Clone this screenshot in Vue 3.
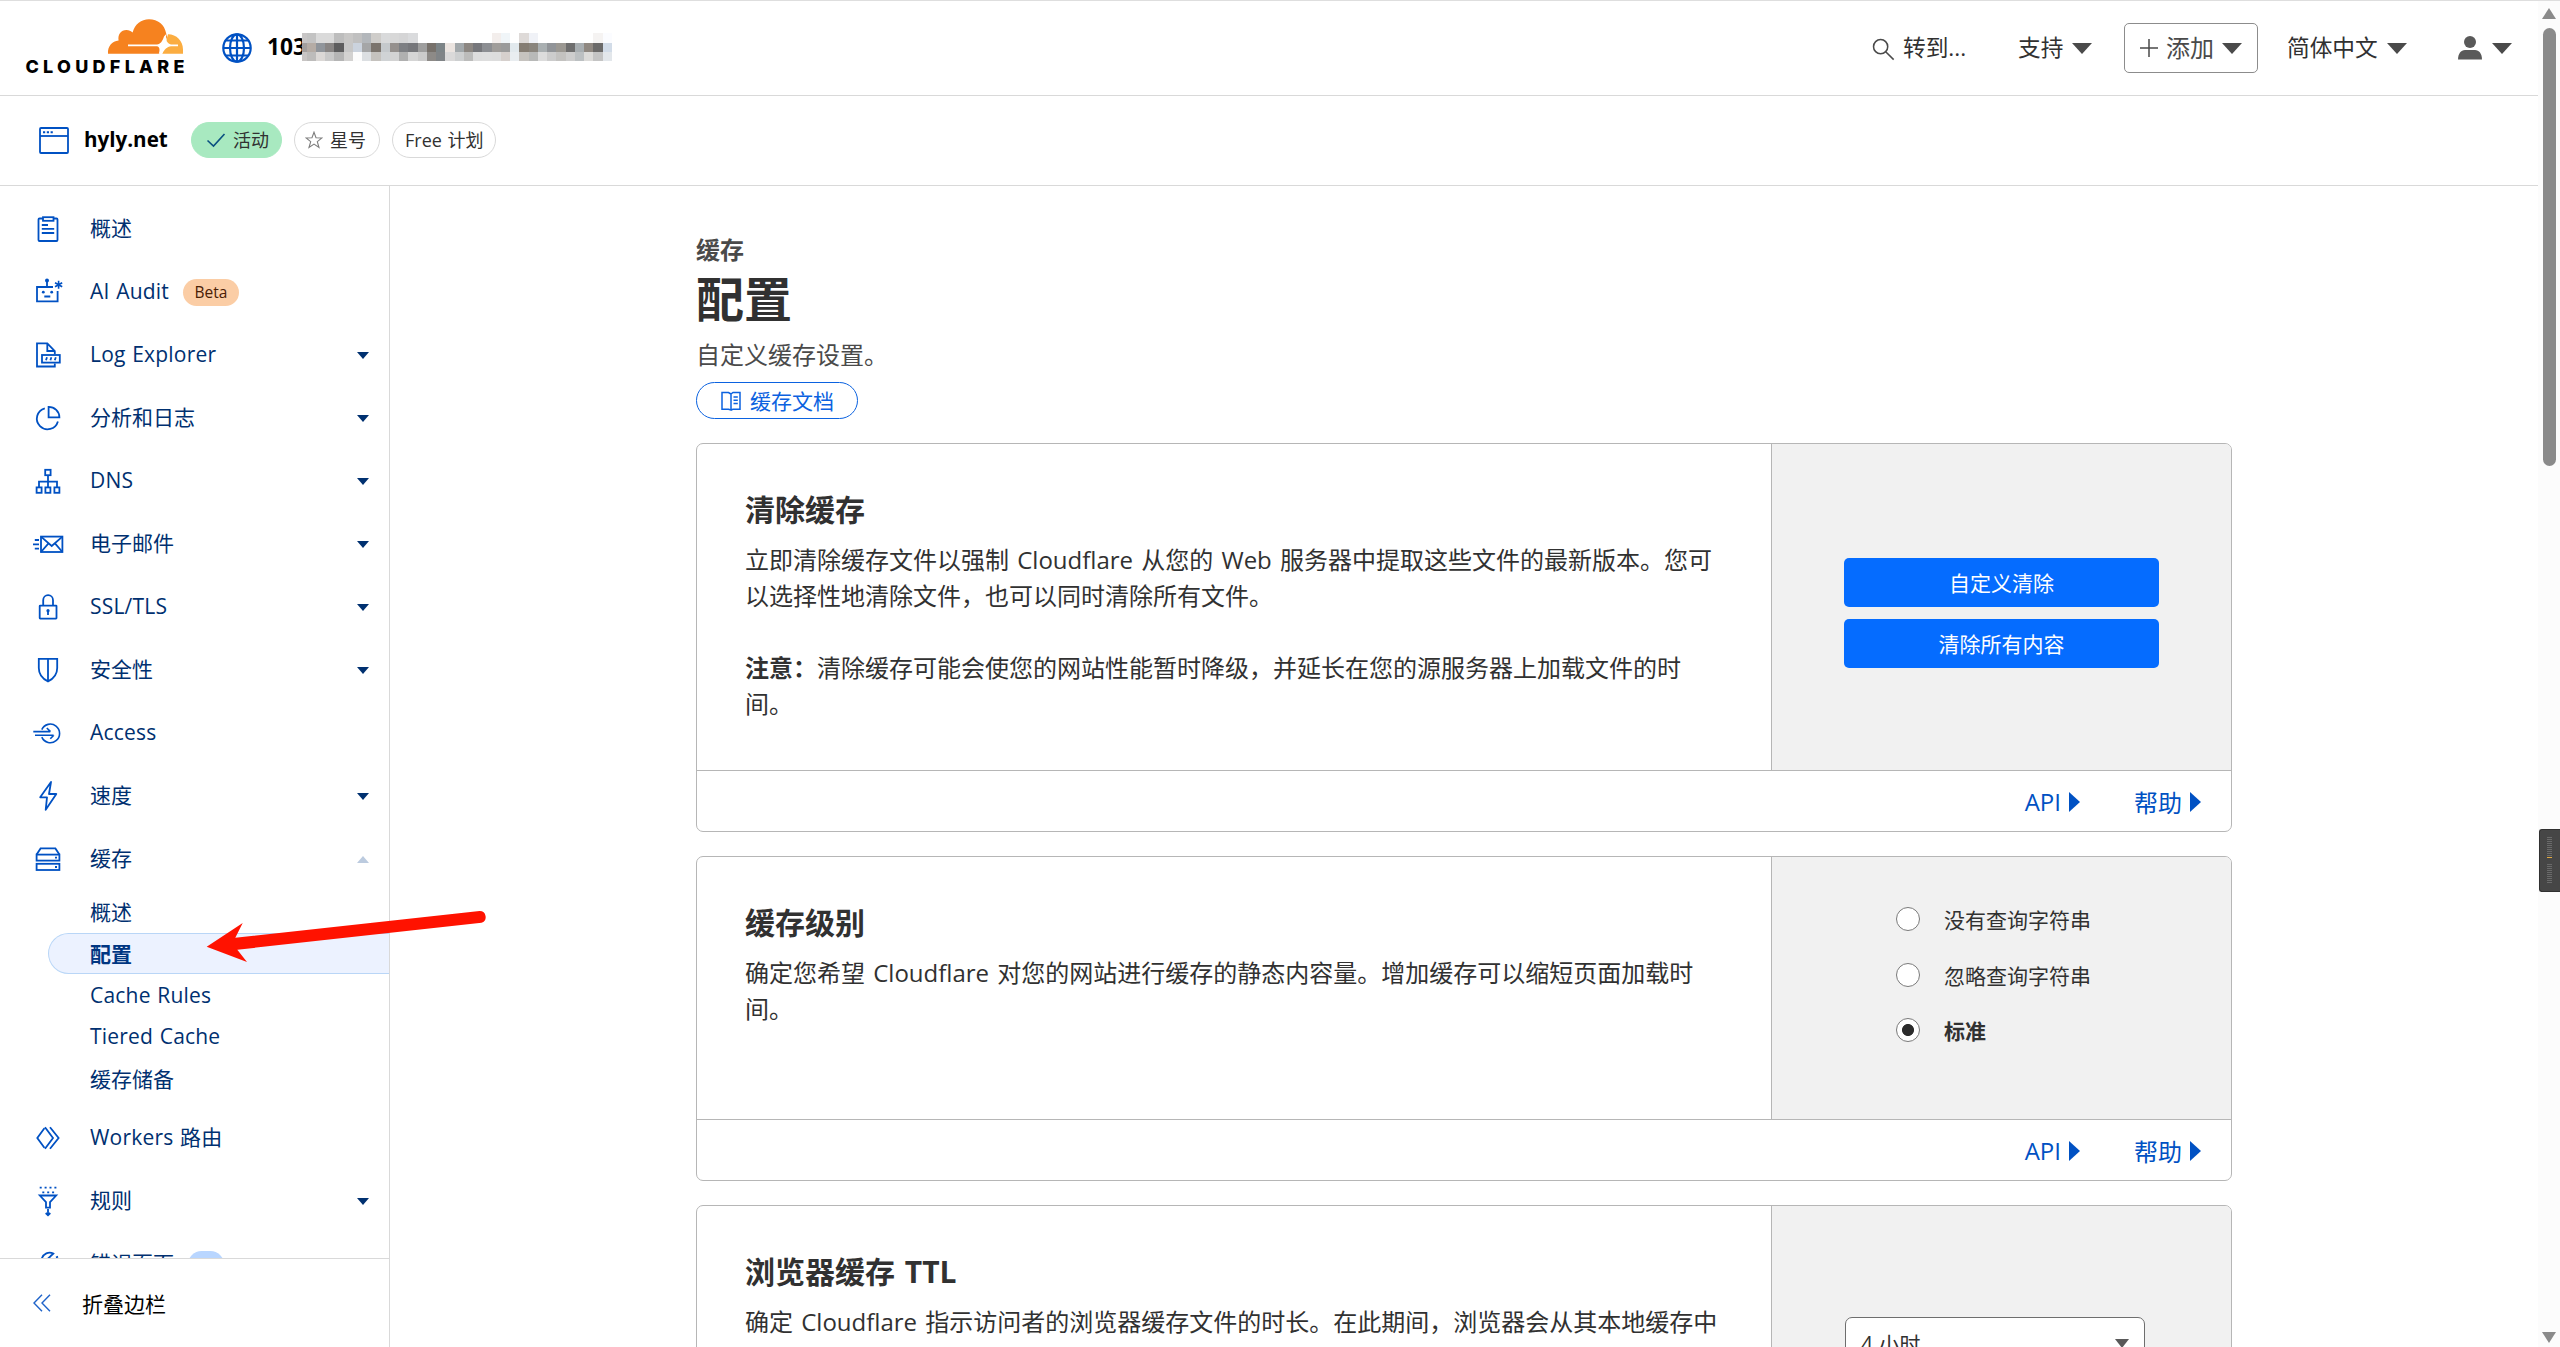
<template>
  <div class="page">
    <div class="page__body">
      <!-- Top bar -->
      <header class="topbar">
        <svg class="topbar__logo" width="158" height="60" viewBox="0 0 158 60" aria-label="Cloudflare">
          <path fill="#fbad41" d="M142 15.3C150.6 15.3 157 22 157 30.5V34.7H136L139 26Z"/>
          <path fill="#f6821f" d="M82 34.7C81.6 27.2 86 21.8 92.6 21.4C91.6 15.6 95 11 100.4 11C103 11 105 12 106.6 13.4C109 5.2 115.2.3 123 .3C132 .3 138.6 6 140 13.8L141 18L136.5 29L133.5 34.7Z"/>
          <path fill="#fff" d="M102 25.4H131C134.5 25 136.4 22.5 138 17.5L140.2 15C139.4 21.5 141 24.3 145 25.4L152 25.5V27.2L145 27.3C141 28 138.5 30 136.4 34.8H132.8C134.2 30.5 133.5 27.6 131 27.2H102Z"/>
          <text x="-.6" y="53.8" textLength="159" class="topbar__wordmark">CLOUDFLARE</text>
        </svg>

        <svg class="topbar__globe" width="30" height="30" viewBox="0 0 30 30" fill="none" stroke="#0051c3" stroke-width="2.2">
          <circle cx="15" cy="15" r="13.7"/>
          <ellipse cx="15" cy="15" rx="7" ry="13.7"/>
          <path d="M15 1V29M1 15H29M4 7.5H26M4 22.5H26"/>
        </svg>
        <strong class="topbar__account">103</strong>
        <div class="mosaic" aria-hidden="true">
          <div v-for="(row, r) in mosaic" :key="r" class="mosaic__row">
            <span v-for="(c, i) in row" :key="i" class="mosaic__cell" :style="{ background: '#' + c }"></span>
          </div>
        </div>

        <div class="topbar__item topbar__item--search">
          <svg width="23" height="23" viewBox="0 0 24 24" fill="none" stroke="#4a4a4a" stroke-width="1.6">
            <circle cx="9" cy="9" r="7.4"/>
            <path d="M14.3 14.3L22.6 22.6"/>
          </svg>
          <span>转到...</span>
        </div>
        <div class="topbar__item topbar__item--support">
          <span>支持</span><i class="caret"></i>
        </div>
        <button class="topbar__add">
          <svg width="18" height="18" viewBox="0 0 18 18" stroke="#4a4a4a" stroke-width="1.5"><path d="M9 0V18M0 9H18"/></svg>
          <span>添加</span><i class="caret"></i>
        </button>
        <div class="topbar__item topbar__item--lang">
          <span>简体中文</span><i class="caret"></i>
        </div>
        <div class="topbar__item topbar__item--user">
          <svg width="24" height="24" viewBox="0 0 24 24" fill="#595959">
            <ellipse cx="12" cy="6" rx="6" ry="6"/>
            <path d="M0 23.6C0 17.5 3 14 7 14H17C21 14 24 17.5 24 23.6Z"/>
          </svg>
          <i class="caret"></i>
        </div>
      </header>

      <!-- Zone bar -->
      <div class="zone">
        <svg width="30" height="27" viewBox="0 0 30 27" fill="none" stroke="#0051c3" stroke-width="1.8">
          <rect x="1" y="1" width="28" height="25" rx="1"/>
          <path d="M1 9H29"/>
          <path d="M4 5.2H14" stroke-dasharray="2.2 1.6" stroke-width="2"/>
        </svg>
        <strong class="zone__name">hyly.net</strong>
        <span class="pill pill--active">
          <svg width="20" height="16" viewBox="0 0 20 16" fill="none" stroke="#0a5080" stroke-width="1.6"><path d="M1.5 8.5L7.5 14L18.5 2"/></svg>
          <span>活动</span>
        </span>
        <span class="pill pill--star">
          <svg width="18" height="18" viewBox="0 0 18 18" fill="none" stroke="#7d7d7d" stroke-width="1.1">
            <path d="M9 1.2L11 6.7L17 6.9L12.3 10.6L14 16.5L9 13.1L4 16.5L5.7 10.6L1 6.9L7 6.7Z"/>
          </svg>
          <span>星号</span>
        </span>
        <span class="pill pill--plan"><span>Free 计划</span></span>
      </div>

      <div class="layout">
        <!-- Sidebar -->
        <aside class="sidebar">
          <nav class="sidebar__nav">
            <template v-for="item in nav" :key="item.label">
              <a class="nav-item">
                <svg class="nav-item__icon" width="32" height="32" viewBox="0 0 32 32" v-html="item.icon"></svg>
                <span class="label" :class="{ 'label--latin': isLatin(item.label) }">{{ item.label }}</span>
                <span v-if="item.badge" class="nav-item__badge" :class="`nav-item__badge--${item.badge.tone}`">{{ item.badge.text }}</span>
                <i v-if="item.arrow" class="nav-item__arrow" :class="{ 'nav-item__arrow--up': item.arrow === 'up' }"></i>
              </a>
              <div v-if="item.children" class="subnav">
                <a v-for="child in item.children" :key="child" class="subnav__item" :class="{ 'subnav__item--active': child === '配置' }">
                  <span class="label" :class="{ 'label--latin': isLatin(child) }">{{ child }}</span>
                </a>
              </div>
            </template>
          </nav>
          <div class="sidebar__collapse">
            <svg width="18" height="18" viewBox="0 0 18 18" fill="none" stroke="#1f63c9" stroke-width="1.4">
              <path d="M9 .8L1 9L9 17.2M17 .8L9 9L17 17.2"/>
            </svg>
            <span>折叠边栏</span>
          </div>
        </aside>

        <!-- Content -->
        <main class="content">
          <div class="content__inner">
            <p class="content__section">缓存</p>
            <h1 class="content__title">配置</h1>
            <p class="content__desc">自定义缓存设置。</p>
            <a class="docs-link">
              <svg width="20" height="20" viewBox="0 0 20 20" fill="none" stroke="#0b62e0" stroke-width="1.5">
                <path d="M1 1.5H7.5L10 3V19L7.5 18.3H1ZM10 3L12 1.5H19V18.3H12L10 19M12.5 6H16.8M12.5 9.2H16.8M12.5 12.4H16.8"/>
              </svg>
              <span class="label">缓存文档</span>
            </a>

            <section v-for="card in cards" :key="card.title" class="card" :style="{ height: card.height + 'px' }">
              <div class="card__main">
                <div class="card__text">
                  <h2 class="card__title">{{ card.title }}</h2>
                  <p v-for="(line, i) in card.lines" :key="i" class="card__line"><b v-if="line.strong">{{ line.strong }}</b>{{ line.text }}</p>
                </div>
                <div class="card__side" :class="`card__side--${card.type}`">
                  <template v-if="card.type === 'buttons'">
                    <button class="btn">自定义清除</button>
                    <button class="btn">清除所有内容</button>
                  </template>
                  <template v-else-if="card.type === 'radios'">
                    <label v-for="opt in levels" :key="opt" class="radio" :class="{ 'radio--on': opt === level }">
                      <span class="radio__dot"></span>
                      <span>{{ opt }}</span>
                    </label>
                  </template>
                  <div v-else class="select">
                    <span>4 小时</span>
                    <i class="select__caret"></i>
                  </div>
                </div>
              </div>
              <footer class="card__footer">
                <a class="card__link">API<i></i></a>
                <a class="card__link">帮助<i></i></a>
              </footer>
            </section>
          </div>
        </main>
      </div>
    </div>

    <div class="scrollbar">
      <i class="scrollbar__up"></i>
      <i class="scrollbar__thumb"></i>
      <i class="scrollbar__down"></i>
    </div>

    <!-- Red pointer over the active entry -->
    <svg class="pointer" width="290" height="54" viewBox="0 0 290 54">
      <path fill="#ff1200" d="M.7 36.7L36.7 13L29.3 27.7L273.5 1A6 6 0 0 1 275.5 12.7L31.3 39.7L41 52Z"/>
    </svg>

    <div class="grip">
      <i v-for="n in 10" :key="'a' + n"></i>
      <i class="grip__mark"></i>
      <i v-for="n in 10" :key="'b' + n" :class="{ 'grip__gap': n === 1 }"></i>
    </div>
  </div>
</template>

<script setup>
import { ref } from 'vue'

const level = ref('标准')
const levels = ['没有查询字符串', '忽略查询字符串', '标准']

const isLatin = (text) => /^[A-Za-z]/.test(text)

const nav = [
  {
    label: '概述',
    icon: '<rect x="6.5" y="5.5" width="19" height="22.5" rx="1"/><rect x="11" y="4.2" width="10.5" height="3.6" fill="#fff"/><path d="M9.8 12H16M9.8 15.8H22.2M9.8 20H22.2"/>',
  },
  {
    label: 'AI Audit',
    badge: { text: 'Beta', tone: 'orange' },
    icon: '<path d="M21 11H5V25.3H25.6V15M15 11V5M12.3 20.5H18.3"/><path d="M26.6 4.7V12.7M23 6.7L30.2 10.7M30.2 6.7L23 10.7" stroke-width="1.6"/><g fill="#0051c3" stroke="none"><circle cx="15" cy="4.5" r="2"/><circle cx="11.3" cy="16.2" r="1.4"/><circle cx="19.7" cy="16.2" r="1.4"/></g>',
  },
  {
    label: 'Log Explorer',
    arrow: 'down',
    icon: '<path d="M22.8 15V12L15.3 4.3H5V27.5H22.8V24.5M15.3 4.3V12H22.8"/><rect x="10" y="16" width="17.8" height="7.6"/><path d="M14 21.3L15 18.3M18.4 21.3L19.4 18.3M22.8 21.3L23.8 18.3"/>',
  },
  {
    label: '分析和日志',
    arrow: 'down',
    icon: '<path d="M12.8 6.3A10.7 10.7 0 1 0 25.9 19.5"/><path d="M16.6 4.9V15.4H27.4A10.8 10.5 0 0 0 16.6 4.9Z"/>',
  },
  {
    label: 'DNS',
    arrow: 'down',
    icon: '<rect x="13.2" y="4.8" width="5.4" height="5.4"/><rect x="4.6" y="22.4" width="5" height="5.4"/><rect x="13.4" y="22.4" width="5" height="5.4"/><rect x="22.4" y="22.4" width="5" height="5.4"/><path d="M16 10.2V22.4M7 22.4V16.6H25V22.4"/>',
  },
  {
    label: '电子邮件',
    arrow: 'down',
    icon: '<rect x="9" y="8.6" width="21.4" height="15.4"/><path d="M9 8.6L19.7 18L30.4 8.6M9 24L16.5 15.4M30.4 24L23 15.4M2.8 12H7M1 16.3H7M2.8 20.6H7"/>',
  },
  {
    label: 'SSL/TLS',
    arrow: 'down',
    icon: '<rect x="7.7" y="14.6" width="16.8" height="13" rx=".5"/><path d="M11.2 14.6V9.2A4.9 5 0 0 1 21 9.2V14.6M16 20V24"/><circle cx="16" cy="19.7" r="1.6" fill="#0051c3" stroke="none"/>',
  },
  {
    label: '安全性',
    arrow: 'down',
    icon: '<path d="M6.8 4.8H25.2V14C25.2 20.5 21 25 16 27.4C11 25 6.8 20.5 6.8 14ZM16 4.8V27.4"/>',
  },
  {
    label: 'Access',
    icon: '<path d="M9.8 12.6A9.3 9.3 0 1 1 9.8 20.2M1.3 14.6H18.3M3 18.2H21.6M14.8 11L18.5 14.6M18.3 21.8L21.8 18.2" stroke-width="1.6"/>',
  },
  {
    label: '速度',
    arrow: 'down',
    icon: '<path d="M19 2L8.2 17.3H15L13.7 29.8L24.3 14H17Z" stroke-linejoin="round"/>',
  },
  {
    label: '缓存',
    arrow: 'up',
    icon: '<path d="M4.6 11.6L8.6 5.4H23.4L27.4 11.6"/><rect x="4.6" y="11.6" width="22.8" height="6"/><rect x="4.6" y="20.8" width="22.8" height="6.2"/><path d="M23 14.6H25M23 24H25"/>',
    children: ['概述', '配置', 'Cache Rules', 'Tiered Cache', '缓存储备'],
  },
  {
    label: 'Workers 路由',
    icon: '<path d="M12.4 6.2L5.3 16L12.4 25.8M13 5.3L21 16L13 26.7M18 5.3L26.6 16L18 26.7"/>',
  },
  {
    label: '规则',
    arrow: 'down',
    icon: '<path d="M7.8 10.5H24.2L18 17.2V22.6H14V17.2ZM16 24V29M13.7 28L16 30.2L18.3 28"/><path d="M7.7 2.7H26M10.3 7.3H23" stroke-dasharray="2 2.9"/>',
  },
  {
    label: '错误页面',
    badge: { text: 'New', tone: 'blue' },
    icon: '<path d="M9.5 11.5C11 5.5 17 3.2 21.3 5.6L15 11.5M24 9.5L26 8.6M19.5 7.2L16 11"/>',
  },
]

const cards = [
  {
    title: '清除缓存',
    type: 'buttons',
    height: 389,
    lines: [
      { text: '立即清除缓存文件以强制 Cloudflare 从您的 Web 服务器中提取这些文件的最新版本。您可' },
      { text: '以选择性地清除文件，也可以同时清除所有文件。' },
      { text: '' },
      { strong: '注意：', text: '清除缓存可能会使您的网站性能暂时降级，并延长在您的源服务器上加载文件的时' },
      { text: '间。' },
    ],
  },
  {
    title: '缓存级别',
    type: 'radios',
    height: 325,
    lines: [
      { text: '确定您希望 Cloudflare 对您的网站进行缓存的静态内容量。增加缓存可以缩短页面加载时' },
      { text: '间。' },
    ],
  },
  {
    title: '浏览器缓存 TTL',
    type: 'select',
    height: 325,
    lines: [
      { text: '确定 Cloudflare 指示访问者的浏览器缓存文件的时长。在此期间，浏览器会从其本地缓存中' },
    ],
  },
]

// Censored account name, one hex colour per block
const mosaic = [
  'c8c6c6 c3c3c3 dadada dadada bdbdbd c8c7c6 c0c0c0 b3b7bb cfcdca d9dadb d8d8d8 d5d5d6 dadbdd fff fff fff fff fff fff fff fff f3eeec f0f5f8 fff dedad8 f0f2f7 fff fff fff fff fff fff f5f3f2 fbfcff',
  'a29f9e b5aca5 90959b 888584 5d5d5e c7c7c7 cbd3de a5a6a7 7b746d c5c9cc 95908d 7d7f83 76777b 9e9e9e 77716b 7c8487 ebe4e0 a2a8ab 8c8782 76777b 8c8e92 a09d9a 9b9b9b e2e9ed 857d73 8a857d a9afb1 919498 9b9892 6e6e6e a8aeb1 8f8881 6b6a69 d2dce8',
  'c8c5c4 bdbcbb dbd8d6 c9c9c9 b5b5b5 d3d2d1 fcfcfc dcdfe2 c5c2be d0d3d5 d3d3d3 b0b0b0 d5d5d5 cbcbcb 8d8a87 808487 dad9d9 cdcfd0 bcbcbb dddddd dedede dddddd d6d0cd e9edf0 c6c3bf b8b9b8 dcdcdc cccccc c3c2c0 cdcdcd bcc0c2 dcdbd9 c4c4c4 e3e7eb',
].map((row) => row.split(' '))
</script>

<style>
body {
  margin: 0;
  overflow: hidden;
}
</style>

<style scoped>
.page {
  position: relative;
  box-sizing: border-box;
  display: flex;
  width: 2560px;
  height: 1347px;
  overflow: hidden;
  border-top: 1px solid #dedede;
  background: #fff;
  color: #313131;
  font-family: 'Open Sans', 'Noto Sans CJK SC', sans-serif;
  font-size: 21px;
}

.page *,
.page *::before {
  box-sizing: border-box;
}

.page__body {
  display: flex;
  flex-direction: column;
  width: 2538px;
}

/* ─── Top bar ─────────────────────────────────────────────── */
.topbar {
  display: flex;
  align-items: center;
  flex-shrink: 0;
  height: 95px;
  padding: 0 26px;
  border-bottom: 1px solid #d9d9d9;
  font-size: 22.7px;
  line-height: 36px;
}

.topbar__logo {
  margin-top: 2px;
  flex-shrink: 0;
  overflow: visible;
}

.topbar__wordmark {
  font-family: Inter, sans-serif;
  font-size: 18px;
  font-weight: 800;
  fill: #000;
}

.topbar__globe {
  margin-left: 38px;
  flex-shrink: 0;
}

.topbar__account {
  width: 35px;
  margin: -3px 0 0 15px;
  overflow: hidden;
  color: #000;
}

.mosaic {
  width: 310px;
  margin-top: -2px;
}

.mosaic__row {
  display: flex;
  height: 9px;
}

.mosaic__row:first-child {
  height: 10px;
}

.mosaic__cell {
  flex: 2 0 0;
}

.mosaic__cell:first-child {
  flex-grow: 1;
}

.topbar__item {
  display: flex;
  align-items: center;
  white-space: nowrap;
}

.topbar__item--search {
  gap: 8px;
  width: 146px;
  margin-left: 1260px;
}

.topbar__item--search svg {
  margin-top: 3px;
}

.topbar__item--support {
  gap: 9px;
  width: 106px;
}

.topbar__item--lang {
  gap: 9px;
  width: 171px;
  margin-left: 29px;
}

.topbar__item--user {
  gap: 10px;
}

.topbar__add {
  display: flex;
  align-items: center;
  gap: 8px;
  width: 134px;
  height: 50px;
  padding: 0 0 0 15px;
  border: 1px solid #8c8c8c;
  border-radius: 5px;
  background: #fff;
  color: #4a4a4a;
  font: inherit;
  font-size: 24px;
}

.caret {
  border: 10px solid transparent;
  border-top: 11px solid #4a4a4a;
  border-bottom: 0;
}

/* ─── Zone bar ────────────────────────────────────────────── */
.zone {
  display: flex;
  align-items: center;
  flex-shrink: 0;
  height: 90px;
  padding-left: 39px;
  border-bottom: 1px solid #d9d9d9;
}

.zone__name {
  width: 83px;
  margin: -3px 24px 0 15px;
  color: #000;
  font-size: 20.6px;
  white-space: nowrap;
}

.pill {
  display: flex;
  align-items: center;
  gap: 7px;
  height: 36px;
  margin: -2px 12px 0 0;
  border: 1px solid #d9d9d9;
  border-radius: 18px;
  font-size: 18px;
  white-space: nowrap;
}

.pill span {
  margin-top: -2px;
}

.pill--active {
  width: 91px;
  padding-left: 14px;
  border-color: #a8e9c0;
  background: #a8e9c0;
}

.pill--star {
  width: 86px;
  padding-left: 10px;
}

.pill--plan {
  width: 104px;
  padding-left: 12px;
  word-spacing: 1px;
}

/* ─── Sidebar ─────────────────────────────────────────────── */
.layout {
  display: flex;
  flex: 1;
  min-height: 0;
}

.sidebar {
  display: flex;
  flex-direction: column;
  width: 390px;
  border-right: 1px solid #d9d9d9;
  color: #003070;
}

.sidebar__nav {
  flex: 1;
  min-height: 0;
  padding-top: 11px;
  overflow: hidden;
}

.label {
  margin-top: -2px;
}

.label--latin {
  margin-top: -1px;
  letter-spacing: 0.2px;
  word-spacing: 1px;
}

.nav-item {
  display: flex;
  align-items: center;
  height: 63px;
  padding: 0 20px 0 32px;
  line-height: 32px;
}

.nav-item__icon {
  flex-shrink: 0;
  margin-right: 26px;
  overflow: visible;
  fill: none;
  stroke: #0051c3;
  stroke-width: 1.8;
}

.nav-item__badge {
  width: 56px;
  height: 27px;
  margin: 2px 0 0 14px;
  border-radius: 14px;
  font-size: 15.5px;
  line-height: 27px;
  text-align: center;
}

.nav-item__badge--orange {
  background: #fbcda5;
  color: #4a2005;
}

.nav-item__badge--blue {
  width: 36px;
  background: #b9d6ff;
  color: #003682;
  font-size: 11px;
}

.nav-item__arrow {
  margin: 2px 0 0 auto;
  border: 6px solid transparent;
  border-top: 7px solid #003070;
  border-bottom: 0;
}

.nav-item__arrow--up {
  border-top: 0;
  border-bottom: 7px solid #bccbdf;
}

.subnav {
  padding: 1px 0 7px;
}

.subnav__item {
  display: flex;
  align-items: center;
  height: 41.7px;
  margin-left: 48px;
  padding-left: 42px;
}

.subnav__item--active {
  border: 1px solid #b9d6f7;
  border-right: 0;
  border-radius: 21px 0 0 21px;
  padding-left: 41px;
  background: #ecf2ff;
  color: #003682;
  font-weight: 700;
}

.sidebar__collapse {
  display: flex;
  align-items: center;
  gap: 31px;
  height: 89px;
  padding: 0 0 0 33px;
  border-top: 1px solid #d9d9d9;
  color: #000;
}

/* ─── Content ─────────────────────────────────────────────── */
.content {
  flex: 1;
  overflow: hidden;
}

.content__inner {
  width: 1536px;
  margin: 0 auto;
  padding-top: 46px;
}

.content__section,
.content__desc {
  margin: 0;
  color: #4a4a4a;
  font-size: 24px;
  line-height: 36px;
}

.content__section {
  font-weight: 700;
}

.content__title {
  margin: 1px 0 8px;
  font-size: 48px;
  line-height: 60px;
}

.docs-link {
  display: flex;
  align-items: center;
  gap: 9px;
  width: 162px;
  height: 37px;
  margin: 9px 0 24px;
  padding-left: 24px;
  border: 1.5px solid #0b62e0;
  border-radius: 20px;
  color: #0b62e0;
}

/* ─── Card ────────────────────────────────────────────────── */
.card {
  display: flex;
  flex-direction: column;
  margin-bottom: 24px;
  overflow: hidden;
  border: 1px solid #b6b6b6;
  border-radius: 7px;
}

.card__main {
  display: flex;
  flex: 1;
}

.card__text {
  flex: 1;
  padding: 43px 0 0 48px;
  white-space: nowrap;
  word-spacing: 2px;
}

.card__title {
  margin: 0 0 9px;
  font-size: 30px;
  line-height: 46px;
}

.card__line {
  height: 36px;
  margin: 0;
  font-size: 24px;
  line-height: 36px;
}

.card__side {
  display: flex;
  flex-direction: column;
  width: 460px;
  border-left: 1px solid #b6b6b6;
  background: #f1f1f1;
}

.card__side--buttons {
  gap: 12px;
  padding: 114px 72px 0;
}

.card__side--radios {
  gap: 19.5px;
  padding: 44px 0 0 124px;
}

.card__side--select {
  padding: 111px 0 0 73px;
}

.card__footer {
  display: flex;
  align-items: center;
  justify-content: flex-end;
  gap: 54px;
  height: 61px;
  padding-right: 30px;
  border-top: 1px solid #b6b6b6;
}

.card__link {
  display: flex;
  align-items: center;
  gap: 8px;
  color: #0051c3;
  font-size: 24px;
}

.card__link i {
  margin-top: 2px;
  border: 10px solid transparent;
  border-left: 11px solid #0051c3;
  border-right: 0;
}

.btn {
  height: 49px;
  padding: 0 0 2px;
  border: 0;
  border-radius: 5px;
  background: #056cff;
  color: #fff;
  font: inherit;
}

.radio {
  display: flex;
  align-items: center;
  gap: 24px;
  height: 36px;
}

.radio--on {
  font-weight: 700;
}

.radio__dot {
  width: 24px;
  height: 24px;
  border: 1px solid #7a7a7a;
  border-radius: 50%;
  background: #fff;
}

.radio--on .radio__dot {
  background: radial-gradient(circle, #2b2b2b 5.6px, #fff 6.4px);
}

.select {
  display: flex;
  align-items: center;
  justify-content: space-between;
  width: 300px;
  height: 52px;
  padding: 0 15px;
  border: 1px solid #6e6e6e;
  border-radius: 7px;
  background: #fff;
}

.select__caret {
  border: 7px solid transparent;
  border-top: 9px solid #595959;
  border-bottom: 0;
}

/* ─── Scrollbar and overlays ──────────────────────────────── */
.scrollbar {
  display: flex;
  flex-direction: column;
  align-items: center;
  width: 22px;
  padding: 7px 0 4px;
  background: #fcfcfc;
}

.scrollbar__up {
  border: 7px solid transparent;
  border-top: 0;
  border-bottom: 11px solid #8a8a8a;
}

.scrollbar__thumb {
  width: 13px;
  height: 438px;
  margin-top: 9px;
  border-radius: 7px;
  background: #8a8a8a;
}

.scrollbar__down {
  margin-top: auto;
  border: 7px solid transparent;
  border-top: 11px solid #8a8a8a;
  border-bottom: 0;
}

.pointer {
  position: absolute;
  left: 206px;
  top: 909px;
}

.grip {
  position: absolute;
  right: 0;
  top: 828px;
  display: flex;
  flex-direction: column;
  gap: 1px;
  width: 21px;
  height: 63px;
  padding: 7px 0 0 7px;
  border: 1px solid #303030;
  border-right: 0;
  border-radius: 3px 0 0 3px;
  background: #464646;
}

.grip i {
  width: 5px;
  height: 1px;
  background: #6a6a6a;
}

.grip .grip__mark {
  background: #e0a840;
}

.grip .grip__gap {
  margin-top: 5px;
}
</style>
